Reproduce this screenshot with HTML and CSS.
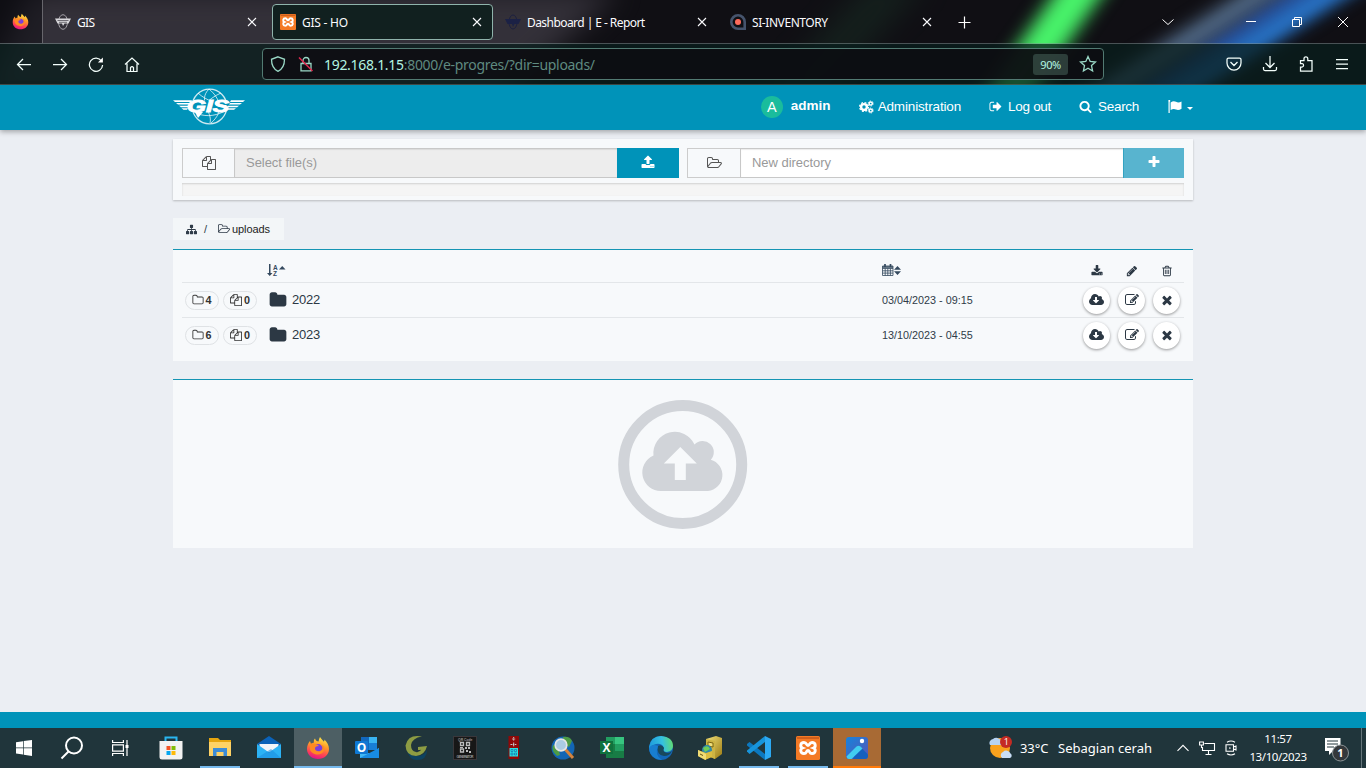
FILE: index.html
```html
<!DOCTYPE html>
<html lang="en">
<head>
<meta charset="utf-8">
<title>GIS - HO</title>
<link rel="stylesheet" href="styles.css">
</head>
<body>
<svg class="defs" width="0" height="0" aria-hidden="true">
  <defs>
    <linearGradient id="ffo" x1=".7" y1="0" x2=".4" y2="1"><stop offset="0" stop-color="#ffe94a"/><stop offset=".4" stop-color="#ff9a27"/><stop offset=".75" stop-color="#ff4254"/><stop offset="1" stop-color="#e31587"/></linearGradient>
    <linearGradient id="edg" x1="0" y1=".4" x2="1" y2=".3"><stop offset="0" stop-color="#1e9bdc"/><stop offset=".55" stop-color="#35c1e0"/><stop offset="1" stop-color="#62dc6e"/></linearGradient>
    <linearGradient id="cab" x1="0" y1="0" x2="1" y2="1"><stop offset="0" stop-color="#f2e27a"/><stop offset="1" stop-color="#9b7a12"/></linearGradient>
    <linearGradient id="ph" x1="0" y1="0" x2="1" y2="1"><stop offset="0" stop-color="#1583dc"/><stop offset="1" stop-color="#5a55b5"/></linearGradient>
  </defs>
  <symbol id="folder" viewBox="0 0 1792 1792"><path d="M1728 608v704q0 92-66 158t-158 66h-1216q-92 0-158-66t-66-158v-960q0-92 66-158t158-66h320q92 0 158 66t66 158v32h672q92 0 158 66t66 158z"/></symbol>
  <symbol id="folder-o" viewBox="0 0 1792 1792"><path d="M1600 1312v-704q0-40-28-68t-68-28h-704q-40 0-68-28t-28-68v-64q0-40-28-68t-68-28h-320q-40 0-68 28t-28 68v960q0 40 28 68t68 28h1216q40 0 68-28t28-68zm128-704v704q0 92-66 158t-158 66h-1216q-92 0-158-66t-66-158v-960q0-92 66-158t158-66h320q92 0 158 66t66 158v32h672q92 0 158 66t66 158z"/></symbol>
  <symbol id="folder-open-o" viewBox="0 0 1920 1792"><path d="M1781 931q0-35-53-35h-1088q-40 0-85.500 21.500t-71.500 52.500l-294 363q-18 24-18 40 0 35 53 35h1088q40 0 86-22t71-53l294-363q18-22 18-39zm-1141-163h768v-160q0-40-28-68t-68-28h-576q-40 0-68-28t-28-68v-64q0-40-28-68t-68-28h-320q-40 0-68 28t-28 68v853l256-315q44-53 116-87.500t140-34.500zm1269 163q0 62-46 120l-295 363q-43 53-116 87.500t-140 34.500h-1088q-92 0-158-66t-66-158v-960q0-92 66-158t158-66h320q92 0 158 66t66 158v32h544q92 0 158 66t66 158v160h192q54 0 99 24.500t67 70.500q15 32 15 68z"/></symbol>
  <symbol id="copy" viewBox="0 0 1792 1792"><path d="M1696 384q40 0 68 28t28 68v1216q0 40-28 68t-68 28h-960q-40 0-68-28t-28-68v-288h-544q-40 0-68-28t-28-68v-672q0-40 20-88t48-76l408-408q28-28 76-48t88-20h416q40 0 68 28t28 68v328q68-40 128-40h416zm-544 213l-299 299h299v-299zm-640-384l-299 299h299v-299zm196 647l316-316v-416h-384v416q0 40-28 68t-68 28h-416v640h512v-256q0-40 20-88t48-76zm956 804v-1152h-384v416q0 40-28 68t-68 28h-416v640h896z"/></symbol>
  <symbol id="upload" viewBox="0 0 1792 1792"><path d="M1344 1472q0-26-19-45t-45-19-45 19-19 45 19 45 45 19 45-19 19-45zm256 0q0-26-19-45t-45-19-45 19-19 45 19 45 45 19 45-19 19-45zm128-224v320q0 40-28 68t-68 28h-1472q-40 0-68-28t-28-68v-320q0-40 28-68t68-28h427q21 56 70.500 92t110.500 36h256q61 0 110.500-36t70.500-92h427q40 0 68 28t28 68zm-325-648q-17 40-59 40h-256v448q0 26-19 45t-45 19h-256q-26 0-45-19t-19-45v-448h-256q-42 0-59-40-17-39 14-69l448-448q18-19 45-19t45 19l448 448q31 30 14 69z"/></symbol>
  <symbol id="download" viewBox="0 0 1792 1792"><path d="M1344 1344q0-26-19-45t-45-19-45 19-19 45 19 45 45 19 45-19 19-45zm256 0q0-26-19-45t-45-19-45 19-19 45 19 45 45 19 45-19 19-45zm128-224v320q0 40-28 68t-68 28h-1472q-40 0-68-28t-28-68v-320q0-40 28-68t68-28h465l135 136q58 56 136 56t136-56l136-136h464q40 0 68 28t28 68zm-325-569q17 41-14 70l-448 448q-18 19-45 19t-45-19l-448-448q-31-29-14-70 17-39 59-39h256v-448q0-26 19-45t45-19h256q26 0 45 19t19 45v448h256q42 0 59 39z"/></symbol>
  <symbol id="plus" viewBox="0 0 1792 1792"><path d="M1600 736v192q0 40-28 68t-68 28h-416v416q0 40-28 68t-68 28h-192q-40 0-68-28t-28-68v-416h-416q-40 0-68-28t-28-68v-192q0-40 28-68t68-28h416v-416q0-40 28-68t68-28h192q40 0 68 28t28 68v416h416q40 0 68 28t28 68z"/></symbol>
  <symbol id="sitemap" viewBox="0 0 1792 1792"><path d="M1792 1248v320q0 40-28 68t-68 28h-320q-40 0-68-28t-28-68v-320q0-40 28-68t68-28h96v-192h-512v192h96q40 0 68 28t28 68v320q0 40-28 68t-68 28h-320q-40 0-68-28t-28-68v-320q0-40 28-68t68-28h96v-192h-512v192h96q40 0 68 28t28 68v320q0 40-28 68t-68 28h-320q-40 0-68-28t-28-68v-320q0-40 28-68t68-28h96v-192q0-52 38-90t90-38h512v-192h-96q-40 0-68-28t-28-68v-320q0-40 28-68t68-28h320q40 0 68 28t28 68v320q0 40-28 68t-68 28h-96v192h512q52 0 90 38t38 90v192h96q40 0 68 28t28 68z"/></symbol>
  <symbol id="times" viewBox="0 0 1792 1792"><path d="M1490 1322q0 40-28 68l-136 136q-28 28-68 28t-68-28l-294-294-294 294q-28 28-68 28t-68-28l-136-136q-28-28-28-68t28-68l294-294-294-294q-28-28-28-68t28-68l136-136q28-28 68-28t68 28l294 294 294-294q28-28 68-28t68 28l136 136q28 28 28 68t-28 68l-294 294 294 294q28 28 28 68z"/></symbol>
  <symbol id="pencil" viewBox="0 0 1792 1792"><path d="M491 1536l91-91-235-235-91 91v107h128v128h107zm523-928q0-22-22-22-10 0-17 7l-542 542q-7 7-7 17 0 22 22 22 10 0 17-7l542-542q7-7 7-17zm-54-192l416 416-832 832h-416v-416zm683 96q0 53-37 90l-166 166-416-416 166-165q36-38 90-38 53 0 91 38l235 234q37 39 37 91z"/></symbol>
  <symbol id="trash" viewBox="0 0 1792 1792"><path d="M704 736v576q0 14-9 23t-23 9h-64q-14 0-23-9t-9-23v-576q0-14 9-23t23-9h64q14 0 23 9t9 23zm256 0v576q0 14-9 23t-23 9h-64q-14 0-23-9t-9-23v-576q0-14 9-23t23-9h64q14 0 23 9t9 23zm256 0v576q0 14-9 23t-23 9h-64q-14 0-23-9t-9-23v-576q0-14 9-23t23-9h64q14 0 23 9t9 23zm128 724v-948h-896v948q0 22 7 40.500t14.500 27 10.500 8.500h832q3 0 10.500-8.500t14.500-27 7-40.500zm-672-1076h448l-48-117q-7-9-17-11h-317q-10 2-17 11zm928 32v64q0 14-9 23t-23 9h-96v948q0 83-47 143.500t-113 60.500h-832q-66 0-113-58.500t-47-141.500v-952h-96q-14 0-23-9t-9-23v-64q0-14 9-23t23-9h309l70-167q15-37 54-63t79-26h320q40 0 79 26t54 63l70 167h309q14 0 23 9t9 23z"/></symbol>
  <symbol id="cloud-down" viewBox="-64 0 1920 1792"><path d="M1216 928q0-14-9-23t-23-9h-224v-352q0-13-9.500-22.500t-22.500-9.500h-192q-13 0-22.500 9.500t-9.500 22.500v352h-224q-13 0-22.500 9.500t-9.500 22.500q0 14 9 23l352 352q9 9 23 9t23-9l351-351q10-12 10-24zm640 224q0 159-112.500 271.500t-271.500 112.500h-1088q-185 0-316.500-131.500t-131.500-316.500q0-130 70-240t188-165q-2-30-2-43 0-212 150-362t362-150q156 0 285.500 87t188.500 231q71-62 166-62 106 0 181 75t75 181q0 76-41 138 130 31 213.500 135.500t83.500 238.500z"/></symbol>
  <symbol id="edit" viewBox="0 0 1792 1792"><path d="M888 1184l116-116-152-152-116 116v56h96v96h56zm440-720q-16-16-33 1l-350 350q-17 17-1 33t33-1l350-350q17-17 1-33zm80 594v190q0 119-84.500 203.500t-203.500 84.500h-832q-119 0-203.500-84.500t-84.500-203.500v-832q0-119 84.500-203.500t203.500-84.500h832q63 0 117 25 15 7 18 23 3 17-9 29l-49 49q-14 14-32 8-23-6-45-6h-832q-66 0-113 47t-47 113v832q0 66 47 113t113 47h832q66 0 113-47t47-113v-126q0-13 9-22l64-64q15-15 35-7t20 29zm-96-738l288 288-672 672h-288v-288zm444 132l-92 92-288-288 92-92q28-28 68-28t68 28l152 152q28 28 28 68t-28 68z"/></symbol>
  <symbol id="search" viewBox="0 0 1792 1792"><path d="M1216 832q0-185-131.500-316.500t-316.500-131.500-316.500 131.500-131.500 316.500 131.500 316.500 316.500 131.500 316.500-131.500 131.500-316.500zm512 832q0 52-38 90t-90 38q-54 0-90-38l-343-342q-179 124-399 124-143 0-273.500-55.500t-225-150-150-225-55.500-273.500 55.500-273.500 150-225 225-150 273.500-55.500 273.500 55.500 225 150 150 225 55.500 273.500q0 220-124 399l343 343q37 37 37 90z"/></symbol>
  <symbol id="signout" viewBox="0 0 1792 1792"><path d="M704 1440q0 4 1 20t.5 26.500-3 23.500-10 19.500-20.500 6.500h-320q-119 0-203.500-84.500t-84.500-203.500v-704q0-119 84.500-203.500t203.500-84.500h320q13 0 22.500 9.500t9.500 22.500q0 4 1 20t.5 26.500-3 23.500-10 19.500-20.500 6.500h-320q-66 0-113 47t-47 113v704q0 66 47 113t113 47h312l11.500 1 11.500 3 8 5.500 7 9 2 13.500zm1004-544q0 26-19 45l-544 544q-19 19-45 19t-45-19-19-45v-288h-448q-26 0-45-19t-19-45v-384q0-26 19-45t45-19h448v-288q0-26 19-45t45-19 45 19l544 544q19 19 19 45z"/></symbol>
  <symbol id="xclose" viewBox="0 0 16 16"><path d="M4 4l8 8M12 4l-8 8" fill="none" stroke="currentColor" stroke-width="1.100"/></symbol>
  <symbol id="firefox" viewBox="0 0 24 24"><path d="M14 1c1 2 3 3 3.500 4.500 1 0 1-1 .8-2C21 6 23 9 23 13c0 6-5 10-11 10S1 19 1 13c0-3 1-6 3-8l1 3c1-1 2-1.500 3-1.500-.5-1.500 0-3 1-4 .5 2 2 3 3.500 3C13 4 13 2.500 14 1z" fill="url(#ffo)"/><circle cx="12" cy="13" r="5" fill="#7a3fdb"/><path d="M4 8c4-1 7 0 9 2-3 0-4 1-4 2.500 0 3 5 4 7 1 1-2 0-4-2-5 4 0 5 4 4 6-2 6-12 5-14-1z" fill="#ff8a22"/></symbol>
  <symbol id="xampp" viewBox="0 0 24 24"><rect width="24" height="24" rx="1.500" fill="#f47a25"/><path d="M1 1h22v2H1z" fill="#d0601c"/><path d="M8 6.500c3 0 2 3 4 3s1-3 4-3c4 0 4 4.500 1.500 5.500 2.500 1 2.500 5.500-1.500 5.500-3 0-2-3-4-3s-1 3-4 3c-4 0-4-4.500-1.500-5.500C4 11 4 6.500 8 6.500z" fill="none" stroke="#fff" stroke-width="2.900"/></symbol>
</svg>

<div class="chrome">
  <svg class="aurora" width="1366" height="85" viewBox="0 0 1366 85">
    <path class="haze" d="M30 -10H620L500 100H-20z" fill="#47434d" opacity=".65"/>
    <path class="glow" d="M1078 -40h48L1007 130h-48z" fill="#48f36a"/>
    <path class="glow" d="M1330 -40h56L1120 130h-56z" fill="#24468e"/>
    <path class="glow" d="M1294 -40h38L1066 130h-38z" fill="#56708e"/>
    <path class="glow" d="M1366 -40h36L1136 130h-36z" fill="#2a80da"/>
    <path class="haze" d="M870 -20h60L820 100h-60z" fill="#1a3327" opacity=".45"/>
  </svg>
  <div class="tabs">
    <div class="pin"><svg width="17" height="17"><use href="#firefox"/></svg></div>
    <div class="tab"><svg width="16" height="16" viewBox="0 0 16 16"><ellipse class="line" cx="8" cy="8" rx="4.500" ry="7.300" stroke="#a5a2a8"/><path d="M0 4.500h16l-2.500 5h-4L8 12l-1-2.500H2.500z" fill="#d9d8dc"/><path d="M2.500 6.500h11M4 8.300h8" stroke="#55525a" stroke-width=".8"/></svg><span class="w3">GIS</span><svg class="x" width="16" height="16"><use href="#xclose"/></svg></div>
    <div class="tab active"><svg width="16" height="16"><use href="#xampp"/></svg><span>GIS - HO</span><svg class="x" width="16" height="16"><use href="#xclose"/></svg></div>
    <div class="tab"><svg class="navy" width="16" height="16" viewBox="0 0 16 16"><ellipse class="line" cx="8" cy="8" rx="4" ry="7" stroke="#1c2040"/><path d="M0 5h16l-2.500 5H9.500L8 13l-1-3H2.500z"/></svg><span class="w1">Dashboard | E - Report</span><svg class="x" width="16" height="16"><use href="#xclose"/></svg></div>
    <div class="tab"><svg width="16" height="16" viewBox="0 0 16 16"><path d="M8 1.300a6.700 6.700 0 1 0 0 13.400h6.700V8A6.700 6.700 0 0 0 8 1.300z" fill="none" stroke="#46546d" stroke-width="2.600"/><circle cx="8" cy="8" r="3" fill="#ff6b5c"/></svg><span class="w2">SI-INVENTORY</span><svg class="x" width="16" height="16"><use href="#xclose"/></svg></div>
    <svg class="newtab" width="16" height="16" viewBox="0 0 16 16"><path d="M8.500 2.500v12M2.500 8.500h12" stroke="#fff" stroke-width="1.200"/></svg>
    <div class="winctl">
      <svg width="16" height="16" viewBox="0 0 16 16"><path d="M2.500 5.500l5.500 5 5.500-5"/></svg>
      <i></i>
      <b><svg width="16" height="16" viewBox="0 0 16 16"><path d="M3 7.500h10"/></svg></b>
      <b><svg width="16" height="16" viewBox="0 0 16 16"><path d="M3.500 5.500h7v7h-7zM5.500 5.500v-2h7v7h-2"/></svg></b>
      <b><svg width="16" height="16" viewBox="0 0 16 16"><path d="M3 3l10 10M13 3L3 13"/></svg></b>
    </div>
  </div>
  <div class="toolbar">
    <div class="navbtns">
      <svg viewBox="0 0 16 16"><path d="M15 8.500H1.500M7 3L1.500 8.500 7 14"/></svg>
      <svg viewBox="0 0 16 16"><path d="M1 8.500h13.500M9 3l5.500 5.500L9 14"/></svg>
      <svg viewBox="0 0 16 16"><path d="M13.500 5A6.600 6.600 0 1 0 14.600 9"/><path d="M14.900 1.500v5h-5z" fill="#fff" stroke="none"/></svg>
      <svg viewBox="0 0 16 16"><path d="M1 8.500L8 2l7 6.500M3 7.500v8h10v-8M6.500 15.500v-4q1.500-2 3 0v4"/></svg>
    </div>
    <div class="url">
      <svg width="16" height="16" viewBox="0 0 16 16"><path d="M8 .8l6.500 2.500C14.500 9 13 13 8 15.300 3 13 1.500 9 1.500 3.300z"/></svg>
      <svg class="lock" width="16" height="16" viewBox="0 0 16 16"><path d="M3 7.500h10v7.300H3zM5 7V4.500a3 3 0 0 1 6 0V7"/><path d="M1 1.500l13.500 13.500" stroke="#e22850" stroke-width="1.500"/></svg>
      <span class="addr"><em>192.168.1.15</em>:8000/e-progres/?dir=uploads/</span>
      <span class="zoom">90%</span>
      <svg width="18" height="18" viewBox="0 0 18 18"><path d="M9 1.500l2.200 4.900 5.300.6-4 3.600 1.100 5.400L9 13.300 4.400 16l1.100-5.400-4-3.600 5.300-.6z"/></svg>
    </div>
    <div class="tools">
      <svg viewBox="0 0 16 16"><path d="M2.500 2h11q1.500 0 1.500 1.500V7A7 7 0 0 1 1 7V3.500Q1 2 2.500 2zM4.500 6L8 9.500 11.500 6"/></svg>
      <svg viewBox="0 0 16 16"><path d="M8 0v11M3.500 7L8 11.500 12.500 7M1.500 11v2q0 1.500 1.500 1.500h10q1.500 0 1.500-1.500v-2"/></svg>
      <svg viewBox="0 0 16 16"><path d="M2.500 15V11h1.700a1.800 1.800 0 0 0 0-3.500H2.500V4.500H6V2.800a1.900 1.900 0 0 1 3.800 0v1.700H14V15z"/></svg>
      <svg viewBox="0 0 16 16"><path d="M2 3.500h12M2 8h12M2 12.500h12"/></svg>
    </div>
  </div>
</div>

<header class="site">
  <div class="wrap">
    <svg class="logo" width="73" height="37" viewBox="0 0 73 37"><g class="line" stroke="#fff" stroke-opacity=".8"><circle cx="36.500" cy="18.500" r="17.300" stroke-width="1.300"/><path d="M25 5c8 8 20 9 26 18M48 5c-14 6-20 16-24 23M36 1c-12 12 4 23 1 34M36 1c12 10 15 23 2 34M21 24c9 5 20 5 31-1" stroke-width=".9"/></g><path d="M14 12.500h45l-7 11.500H20z" fill="#0093b9"/><g fill="#fff"><path d="M0 12.300h19l-1 1.600H2zM3 15h15l-1 1.600H5zM6 17.700h10l-1 1.500H8zM8.500 20.300H15l-1 1.500h-3.500zM58 12.300h14l-2 1.600H57zM57 15h12l-2 1.600H56zM55 17.700h11l-2 1.500H54zM54 20.300h9l-2 1.500h-8z"/><path d="M22 24h8l-5 6z"/></g><text class="gis-word" x="14" y="24" textLength="42" lengthAdjust="spacingAndGlyphs">GIS</text></svg>
    <nav>
      <a class="user"><span class="avatar">A</span><strong>admin</strong></a>
      <a><svg class="line" width="15" height="14" viewBox="0 0 15 14" stroke="#fff"><circle cx="5" cy="7" r="2.900" stroke-width="2.400"/><circle cx="5" cy="7" r="4.400" stroke-width="1.300" stroke-dasharray="1.900 1.556"/><circle cx="11.700" cy="3.500" r="1.600" stroke-width="1.500"/><circle cx="11.700" cy="3.500" r="2.500" stroke-dasharray="1.200 1.418"/><circle cx="11.700" cy="10.500" r="1.600" stroke-width="1.500"/><circle cx="11.700" cy="10.500" r="2.500" stroke-dasharray="1.200 1.418"/></svg><span>Administration</span></a>
      <a class="g6"><svg width="13" height="13"><use href="#signout"/></svg><span>Log out</span></a>
      <a class="g6"><svg width="13" height="13"><use href="#search"/></svg><span>Search</span></a>
      <a class="g6 flag"><svg width="14" height="13" viewBox="0 0 14 13"><path d="M.3.800a1 1 0 1 1 1.400 1V13H.500V1.800zM2.600 2.500Q5.500.500 8 1.800t5.500-.300v7.200q-3 2-5.500.800t-5.400.600z"/></svg><svg width="6" height="3" viewBox="0 0 6 3"><path d="M0 0h6L3 3z"/></svg></a>
    </nav>
  </div>
</header>

<main>
  <section class="upload">
    <div class="groups">
      <div class="group"><span class="addon"><svg width="14" height="14"><use href="#copy"/></svg></span><span class="field off">Select file(s)</span><span class="btn"><svg width="14" height="14"><use href="#upload"/></svg></span></div>
      <div class="group"><span class="addon wide"><svg width="15" height="14"><use href="#folder-open-o"/></svg></span><span class="field">New directory</span><span class="btn dim"><svg width="14" height="14"><use href="#plus"/></svg></span></div>
    </div>
    <div class="progress"></div>
  </section>
  <div class="crumbs"><svg width="11" height="11"><use href="#sitemap"/></svg><span class="slash">/</span><svg width="12" height="12"><use href="#folder-open-o"/></svg><span>uploads</span></div>
  <section class="list">
    <div class="row head">
      <span></span>
      <span class="sort"><svg width="12" height="13" viewBox="0 0 12 13"><path d="M2 0h1.500v9H5.500L2.750 12 0 9h2z"/><text x="6" y="5.500">A</text><text x="6" y="12">Z</text></svg><svg width="7" height="4" viewBox="0 0 7 4"><path d="M0 3.500h6.500L3.250 0z"/></svg></span>
      <span class="date"><svg class="line" width="12" height="12" viewBox="0 0 12 12" stroke="currentColor" stroke-width=".8"><path d="M.5 2h10.500v9.500H.5zM.5 4.500H11M.5 6.800H11M.5 9.100H11M3.200 4.500v7M5.800 4.500v7M8.400 4.500v7"/><path d="M.5 3h10.500M3 0v3M8.500 0v3" stroke-width="1.700"/></svg><svg width="7" height="9" viewBox="0 0 7 9"><path d="M0 3.700h7L3.500 0zM0 5.300h7L3.500 9z"/></svg></span>
      <span class="acts"><i><svg width="12" height="12"><use href="#download"/></svg></i><i><svg width="12" height="12"><use href="#pencil"/></svg></i><i><svg width="12" height="12"><use href="#trash"/></svg></i></span>
    </div>
    <div class="row">
      <span class="badges"><b><svg width="12" height="12"><use href="#folder-o"/></svg>4</b><b><svg width="12" height="12"><use href="#copy"/></svg>0</b></span>
      <span class="name"><svg width="18" height="18"><use href="#folder"/></svg>2022</span>
      <span class="date">03/04/2023 - 09:15</span>
      <span class="acts"><a><svg width="15" height="14"><use href="#cloud-down"/></svg></a><a><svg width="14" height="14"><use href="#edit"/></svg></a><a><svg width="14" height="14"><use href="#times"/></svg></a></span>
    </div>
    <div class="row">
      <span class="badges"><b><svg width="12" height="12"><use href="#folder-o"/></svg>6</b><b><svg width="12" height="12"><use href="#copy"/></svg>0</b></span>
      <span class="name"><svg width="18" height="18"><use href="#folder"/></svg>2023</span>
      <span class="date">13/10/2023 - 04:55</span>
      <span class="acts"><a><svg width="15" height="14"><use href="#cloud-down"/></svg></a><a><svg width="14" height="14"><use href="#edit"/></svg></a><a><svg width="14" height="14"><use href="#times"/></svg></a></span>
    </div>
  </section>
  <section class="drop"><svg width="130" height="130" viewBox="0 0 130 130"><circle class="line" cx="64.700" cy="64.500" r="59" stroke="#d1d4d9" stroke-width="11"/><path d="M43 91a18.500 18.500 0 0 1-7.500-35.500A21.500 21.500 0 0 1 76.500 44.500a11 11 0 0 1 16.300 15.200A16 16 0 0 1 90 91z" fill="#d1d4d9"/><path d="M62.300 47l16.500 16.500h-11v16.500h-11V63.500h-11z" fill="#f7f9fb"/></svg></section>
</main>
<footer></footer>

<div class="taskbar">
  <div class="sys">
    <span><svg width="16" height="16" viewBox="0 0 16 16"><path d="M0 2.200l7-1v6.300H0zM7.700 1L16 0v7.500H7.700zM0 8.300h7v6.300l-7-1zM7.700 8.300H16V16l-8.300-1.200z"/></svg></span>
    <span><svg width="24" height="24" viewBox="0 0 24 24" stroke="#fff" stroke-width="2"><circle cx="14" cy="9.500" r="8"/><path d="M8.500 15.500L1.500 22.500"/></svg></span>
    <span><svg width="17" height="16" viewBox="0 0 17 16" stroke="#fff" stroke-width="1.200"><path d="M.6 0v2.500h10.800V0M.6 4.800h10.800v6.400H.6zM.6 16v-2.500h10.800V16M15 0v16"/><path d="M13.500 5h3v3h-3z" fill="#fff" stroke="none"/></svg></span>
  </div>
  <div class="apps">
    <span><svg viewBox="0 0 24 24"><path d="M6.500 6V1.500h11V6" fill="none" stroke="#29b6f0" stroke-width="2"/><path d="M.5 5h23v16q0 2.500-2.500 2.500H3Q.500 23.500.500 21z" fill="#f2f2f2"/><path fill="#f35325" d="M7.500 10h4v4h-4z"/><path fill="#81bc06" d="M12.500 10h4v4h-4z"/><path fill="#05a6f0" d="M7.500 15h4v4h-4z"/><path fill="#ffba08" d="M12.500 15h4v4h-4z"/></svg></span>
    <span class="run"><svg viewBox="0 0 24 24"><path d="M1 2h9l2 2h11v16H1z" fill="#e5a50f"/><path d="M1 6h22v14H1z" fill="#fdd266"/><path d="M5 12h14v8h-3.500v-4h-7v4H5z" fill="#3c8cd6"/></svg></span>
    <span><svg viewBox="0 0 24 24"><path d="M0 8L12 0l12 8-12 7z" fill="#0a62b8"/><path d="M2.500 8h19v8h-19z" fill="#f1f5f9"/><path d="M0 8l12 8.500L24 8v14H0z" fill="#2cb2f4"/><path d="M0 22l14-9 10 9z" fill="#1c8fe0" opacity=".6"/></svg></span>
    <span class="run on"><svg viewBox="0 0 24 24"><use href="#firefox"/></svg></span>
    <span><svg viewBox="0 0 24 24"><path d="M6 1h16v13H6z" fill="#1268bd"/><path d="M14 1h8v6h-8z" fill="#39b5f2"/><path d="M14 7h8v7h-8z" fill="#187fd6"/><path d="M5 12l10 6 9-6v10H5z" fill="#41b7f3"/><path d="M5 22l19-10v10z" fill="#188be2"/><rect y="5" width="13" height="13" rx="1" fill="#0f78d4"/><text class="app-letter" x="1.800" y="15.800">O</text></svg></span>
    <span><svg viewBox="0 0 24 24"><path d="M3 14q4 6 10 6 7 0 10-6 0 10-10 10Q5 24 3 14z" fill="#0d4260"/><path d="M18 .5Q4-2 1.500 9.500 2 20 12 20q9-1 11-10l-9 1v3q4 0 4-1-3 4-6 3-5-1-5-7Q8 2 18 .5z" fill="#8d9c43"/></svg></span>
    <span><svg viewBox="0 0 24 24"><rect x=".5" y=".5" width="23" height="23" fill="#171717" stroke="#39373b"/><text class="tiny" x="5" y="4.500">QR Code</text><path class="line" d="M7.500 6.500h3v3h-3zM13.500 6.500h3v3h-3zM7.500 13h3v3h-3z" stroke="#bbb" stroke-width="1.300"/><path d="M12 11h2v2h-2zM15 11h2v2h-2zM13 14h2v2h-2zM16 15h2v2h-2zM7 11h3v1H7z" fill="#bbb"/><text class="tiny" x="3.500" y="21.500" textLength="17">GENERATOR</text></svg></span>
    <span><svg viewBox="0 0 24 24"><path d="M6.500 0H17v23H6.500z" fill="#8e0808"/><path d="M7.500 12H16v8.500H7.500z" fill="#27e2e0"/><path class="line" d="M9 13.500h2v2H9zM12.500 13.500h2v2h-2zM9 17h2v2H9zM12.500 17h2v2h-2z" stroke="#128" stroke-width=".4"/><path d="M11.700 1v4M10.200 3h3M11.700 6.500v4.500M8.500 8.500h6.500" stroke="#c8c8c8" stroke-dasharray="1.500 .6"/></svg></span>
    <span><svg viewBox="0 0 24 24"><circle cx="12" cy="12" r="11.500" fill="#1265b5"/><path d="M12 1q7-1 9 4l-3 6-5-3zM2 9l5 2 2 8-3 1Q0 15 2 9z" fill="#4d9b45"/><path d="M14 13l8 9" stroke="#d5843e" stroke-width="3"/><circle cx="10" cy="9" r="5.800" fill="#aacbe3" stroke="#e4e6e6" stroke-width="1.700"/></svg></span>
    <span><svg viewBox="0 0 24 24"><path d="M6 1h18v21H6z" fill="#187c45"/><path d="M15 1h9v7h-9z" fill="#37c580"/><path d="M6 1h9v7H6zM15 8h9v7h-9z" fill="#229e61"/><rect y="5" width="13" height="13" fill="#10723d"/><text class="app-letter" x="2.500" y="15.800">X</text></svg></span>
    <span><svg viewBox="0 0 24 24"><circle cx="12" cy="12" r="12" fill="#1267b9"/><path d="M0 11Q2 0 12 0q12 1 12 10 0 5-6 6-5 0-3-4-2-5-8-4-5 1-7 5z" fill="url(#edg)"/><path d="M9 10q4-2 6 2-2 4 3 5 3 0 5-2-2 5-8 5-8-1-6-10z" fill="#18495d"/><path d="M9 10q-4 9 4 14Q1 23 0 12q3-5 9-2z" fill="#187ed0"/></svg></span>
    <span><svg viewBox="0 0 24 24"><path d="M8 3l10-3 6 2v16l-7 5-9-4z" fill="url(#cab)"/><path d="M8 3l9 2v18l-9-4z" fill="#cdb443"/><path d="M10 6l5 1v4l-5-1z" fill="#f1de78" stroke="#7b6411"/><circle cx="9" cy="14" r="5" fill="#3188a9"/><path d="M5 12q5-4 7 1l-5 3z" fill="#6ccc57"/><path d="M0 14l8 3 6-2v6l-7 3-7-4z" fill="#dcbd40"/><path d="M0 14l8 4v6l-8-4z" fill="#f0dc75"/><path d="M2 18l3 1.500" stroke="#695513"/></svg></span>
    <span class="run"><svg viewBox="0 0 24 24"><path d="M18 0l6 3v18l-6 3z" fill="#2ca9f3"/><path d="M0 8l2.500-2L18 18v6L0 9.500z" fill="#0c78bf"/><path d="M0 15.500L2.500 18 18 6V0L0 14.500z" fill="#1794db"/></svg></span>
    <span class="run"><svg viewBox="0 0 24 24"><use href="#xampp"/></svg></span>
    <span class="run photo"><svg viewBox="0 0 24 24"><rect x="1" y="1" width="22" height="22" rx="3" fill="url(#ph)"/><path d="M12 10.500q1.500-1.500 3 0l8 8V20q0 3-3 3H8z" fill="#1560bd"/><path d="M1.500 20.500L11.500 10.500q2-1.700 4 0l2 2L6.500 23H4q-2 0-2.500-2.500z" fill="#41cdf0"/><circle cx="17" cy="5" r="2.200" fill="#fff"/></svg></span>
  </div>
  <div class="tray">
    <svg width="26" height="24" viewBox="0 0 26 24" class="wx"><circle cx="12" cy="12" r="10" fill="#f9a11d"/><path d="M2 9a4 4 0 0 1 3-6 5 5 0 0 1 8 2 2.500 2.500 0 0 1 0 4z" fill="#b7d3f2"/><path d="M14 22a3.500 3.500 0 0 1 1-6 4.500 4.500 0 0 1 7.500 1.500A2.500 2.500 0 0 1 22 22z" fill="#c9def6"/><circle cx="18" cy="6" r="6" fill="#c42b23"/><text x="15.700" y="9.300">1</text></svg>
    <span class="temp">33°C</span><span class="sky">Sebagian cerah</span>
    <svg class="up" width="12" height="8" viewBox="0 0 12 8"><path d="M.5 6.800L6 1.300l5.500 5.500"/></svg>
    <svg class="net" width="17" height="16" viewBox="0 0 17 16"><path d="M5.500 3.500h10v7h-12V7M9.500 10.500v4M6.500 14.500h6M.6 2h3.800v3H.6zM2.500 5v3"/></svg>
    <svg class="cam" width="12" height="16" viewBox="0 0 12 16"><path d="M1 4.800h7.500v6.400H1zM8.500 7L11 6v4L8.500 9M2 2.300q4-2.500 8 0M2 13.700q4 2.500 8 0"/><circle cx="4.800" cy="8" r=".3"/></svg>
    <div class="clock"><span>11:57</span><span>13/10/2023</span></div>
    <svg class="note" width="26" height="26" viewBox="0 0 26 26"><path d="M2 2h15.500v13H10l-4 4v-4H2z" fill="#fff"/><path d="M4 5h11M4 8h11M4 11h7" stroke="#22363c"/><circle cx="17.500" cy="17" r="8" fill="#34383b" stroke="#8c9497"/><text x="14.300" y="21.200">1</text></svg>
  </div>
</div>
</body>
</html>
```
FILE: styles.css
```css
* { box-sizing: border-box; }
body { margin: 0; width: 1366px; height: 768px; overflow: hidden; display: flex; flex-direction: column; background: #ebeef3; font-family: "Liberation Sans", Arial, sans-serif; color: #2f3b48; }
.defs { position: absolute; }
svg { display: block; flex: none; fill: currentColor; }
.line { fill: none; }
.gis-word { font: italic bold 16px "Liberation Sans", sans-serif; fill: #fff; stroke: #fff; stroke-width: .9; }

/* Browser chrome */
.chrome { position: relative; flex: none; height: 85px; background: #100f14; overflow: hidden; font-family: "Noto Sans", "Open Sans", sans-serif; color: #fbfbfe; }
.aurora { position: absolute; inset: 0; fill: none; overflow: visible; }
.glow { filter: blur(9px); }
.haze { filter: blur(14px); }
.tabs { position: relative; height: 44px; border-bottom: 1px solid rgba(130, 150, 150, .5); display: flex; align-items: center; }
.pin { width: 43px; height: 43px; border-right: 1px solid #67666c; background: rgba(12, 12, 18, .5); display: flex; align-items: center; padding-left: 12px; margin-right: 4px; }
.tab { width: 221px; height: 36px; margin-right: 4px; display: flex; align-items: center; gap: 6px; padding: 0 7px; font-size: 12px; white-space: nowrap; border: 1px solid transparent; letter-spacing: -.25px; }
.tab.active { background: #11201f; border-color: #8fb3ab; border-radius: 4px; }
.tab span { padding-top: 1px; }
.tab .w1 { letter-spacing: -.56px; }
.tab .w2 { letter-spacing: -.42px; }
.tab .w3 { letter-spacing: -.7px; }
.tab .x { margin-left: auto; }
.navy { fill: #1b2145; }
.newtab { margin-left: 9px; }
.winctl { margin-left: auto; display: flex; align-items: center; stroke: #fff; }
.winctl svg { fill: none; }
.winctl i { width: 52px; }
.winctl b { width: 46px; display: flex; justify-content: center; }
.toolbar { position: relative; height: 41px; background: rgba(9, 30, 29, .76); border-bottom: 1px solid rgba(110, 115, 110, .55); display: flex; align-items: center; }
.navbtns, .tools { display: flex; stroke: #f4fffc; stroke-width: 1.25; }
.navbtns { padding-left: 16px; gap: 20px; width: 262px; }
.navbtns svg, .tools svg { width: 16px; height: 16px; fill: none; }
.url { width: 842px; height: 32px; border: 1px solid #527a72; border-radius: 4px; background: rgba(13, 12, 17, .83); display: flex; align-items: center; padding: 0 6px 0 7px; stroke: #9ad8c6; stroke-width: 1.3; }
.url svg { fill: none; }
.lock { margin-left: 12px; }
.addr { margin-left: 10px; font-size: 14px; color: #5f8a80; letter-spacing: -.3px; stroke: none; padding-top: 1px; }
.addr em { font-style: normal; color: #b4f5e2; }
.zoom { margin-left: auto; margin-right: 11px; width: 35px; height: 21px; background: rgba(75, 105, 96, .5); border-radius: 3px; font-size: 11px; line-height: 21px; text-align: center; color: #b4f5e2; letter-spacing: -.4px; stroke: none; }
.tools { margin-left: auto; gap: 20px; padding-right: 16px; }

/* Site header */
.site { flex: none; height: 45px; background: #0093b9; color: #fff; box-shadow: 0 2px 5px rgba(0, 0, 0, .3); z-index: 1; }
.wrap { width: 1020px; margin: 0 auto; display: flex; justify-content: space-between; align-items: flex-start; }
.logo { margin-top: 3px; }
nav { height: 43px; display: flex; align-items: center; gap: 28px; font-size: 13.5px; letter-spacing: -.15px; }
nav a { display: flex; align-items: center; gap: 4px; }
nav .g6 { gap: 6px; }
nav .g6 span { letter-spacing: -.3px; }
nav .flag { margin-left: 1px; gap: 5px; }
.flag svg:last-child { margin-top: 3px; }
nav .user { gap: 8px; letter-spacing: 0; }
.user strong { padding-bottom: 2px; }
.avatar { width: 22px; height: 22px; border-radius: 50%; background: #1abc9c; display: grid; place-items: center; font-size: 14.5px; }

/* Page */
main { flex: 1; width: 1020px; margin: 0 auto; padding-top: 9px; }
.upload { height: 61px; background: #f7f9fb; padding: 9px 9px 0; box-shadow: 0 1px 2px rgba(0, 0, 0, .22); }
.groups { display: flex; gap: 8px; }
.group { flex: 1; height: 30px; display: flex; }
.addon { width: 52px; border: 1px solid #ccc; border-right: 0; display: grid; place-items: center; color: #555; padding-left: 1px; }
.addon.wide { width: 53px; }
.field { flex: 1; border: 1px solid #c8c8c8; border-right: 0; background: #fff; color: #999; line-height: 27px; padding-left: 11px; box-shadow: inset 0 1px 1px rgba(0, 0, 0, .08); font-size: 13px; letter-spacing: -.04px; }
.field.off { background: #ededed; }
.btn { width: 62px; background: #0093b9; color: #fff; display: grid; place-items: center; padding-bottom: 2px; }
.btn.dim { width: 61px; background: #58b4cf; border-left: 1px solid #33a3c2; }
.progress { height: 13px; margin-top: 5px; background: #f5f5f5; box-shadow: inset 0 1px 2px rgba(0, 0, 0, .15); }
.crumbs { width: 111px; height: 22px; margin-top: 18px; padding-left: 13px; background: #f3f6f8; display: flex; align-items: center; font-size: 11px; }
.slash { margin: 0 11px 0 7px; }
.crumbs span:last-child { margin-left: 2px; color: #222; letter-spacing: -.1px; }
.list { margin-top: 9px; height: 112px; padding: 0 9px; background: #f7f9fb; border-top: 1px solid #1494b3; }
.row { height: 35px; display: grid; grid-template-columns: 85px 615px 197px 105px; align-items: center; border-top: 1px solid #e3e6e9; }
.row.head { height: 32px; border: 0; padding-top: 9px; color: #34495e; }
.sort, .head .date { display: flex; }
.sort svg:last-child { margin-top: 2px; }
.head .date { align-items: center; padding-bottom: 1px; }
.sort text { font: bold 6.5px "Liberation Sans", sans-serif; }
.badges { display: flex; gap: 4px; padding-left: 3px; }
.badges b { width: 34px; height: 19px; border: 1px solid #dfe2e5; border-radius: 10px; display: flex; align-items: center; justify-content: center; gap: 1px; font-size: 10.8px; color: #333; }
.badges b:nth-child(2) { gap: 2px; }
.name { display: flex; align-items: center; gap: 5px; padding-left: 2px; font-size: 13px; letter-spacing: -.25px; padding-bottom: 2px; color: #2c3844; }
.name svg { margin-top: 2px; }
.date { font-size: 10.8px; }
.acts { display: flex; gap: 8px; padding-left: 4px; color: #2c3844; }
.acts a, .acts i { width: 27px; display: grid; place-items: center; }
.acts a { height: 27px; border-radius: 50%; background: #fff; padding-bottom: 1px; box-shadow: 0 1px 3px rgba(0, 0, 0, .4); }
.drop { margin-top: 18px; height: 169px; background: #f7f9fb; border-top: 1px solid #1494b3; display: flex; justify-content: center; padding-top: 20px; }
footer { flex: none; height: 16px; background: #0093b9; }

/* Taskbar */
.taskbar { flex: none; height: 40px; background: #20353b; display: flex; color: #fff; font-family: "Noto Sans", "Open Sans", sans-serif; }
.sys, .apps { display: flex; }
.sys { width: 147px; }
.sys span, .apps span { width: 48px; height: 40px; display: grid; place-items: center; }
.sys span svg { fill: none; }
.sys span:first-child svg { fill: #fff; }
.apps { gap: 1px; }
.apps svg { width: 24px; height: 24px; }
.apps .run { background: linear-gradient(#76b9ed, #76b9ed) 50% 100% / 40px 2px no-repeat; }
.apps .on { background: linear-gradient(#76b9ed, #76b9ed) 50% 100% / 48px 2px no-repeat, #4d5f64; }
.apps .photo { background: linear-gradient(#ff7a0a, #ff7a0a) 50% 100% / 48px 2px no-repeat, #a86a34; }
.app-letter { font: bold 12px "Open Sans", sans-serif; fill: #fff; }
.tiny { font: bold 3.4px "Liberation Sans", sans-serif; fill: #999; }
.tray { flex: 1; display: flex; align-items: center; padding-left: 107px; font-size: 13px; border-right: 1px solid #65757a; margin-right: 4px; white-space: nowrap; }
.wx text { font: 9px "Open Sans", sans-serif; fill: #fff; }
.temp { margin-left: 6px; width: 30px; letter-spacing: -.1px; }
.sky { margin-left: 8px; width: 95px; letter-spacing: .02px; }
.tray .up, .tray .net, .tray .cam { fill: none; stroke: #fff; stroke-width: 1.1; }
.up { margin-left: 24px; }
.net { margin-left: 10px; }
.cam { margin-left: 9px; }
.clock { width: 62px; margin-left: 10px; display: flex; flex-direction: column; align-items: center; font-size: 11.5px; line-height: 18px; letter-spacing: -.4px; padding-bottom: 1px; }
.note { margin-left: 14px; margin-top: 2px; }
.note text { font: bold 11px "Open Sans", sans-serif; fill: #fff; }
```
